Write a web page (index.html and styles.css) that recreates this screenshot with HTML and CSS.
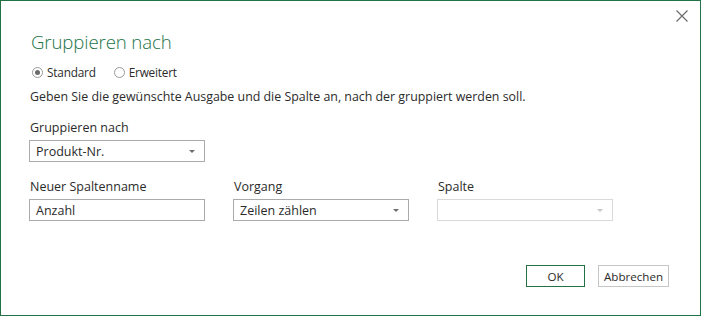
FILE: index.html
```html
<!DOCTYPE html>
<html lang="de">
<head>
<meta charset="utf-8">
<link rel="stylesheet" href="styles.css">
</head>
<body>
<div class="dialog">
  <button class="close" aria-label="Schließen">
    <svg width="12" height="12" viewBox="0 0 12 12"><path d="M0.5 0.5 L11.5 11.5 M11.5 0.5 L0.5 11.5" stroke="#6d6d6d" stroke-width="1.2" fill="none"/></svg>
  </button>
  <h1 class="title">Gruppieren nach</h1>
  <div class="radios">
    <label class="radio"><span class="dot checked"></span>Standard</label>
    <label class="radio"><span class="dot"></span>Erweitert</label>
  </div>
  <p class="desc">Geben Sie die gewünschte Ausgabe und die Spalte an, nach der gruppiert werden soll.</p>
  <div class="label">Gruppieren nach</div>
  <div class="select w"><span>Produkt-Nr.</span><span class="arrow"></span></div>
  <div class="row">
    <div class="col">
      <div class="label">Neuer Spaltenname</div>
      <div class="input">Anzahl</div>
    </div>
    <div class="col">
      <div class="label">Vorgang</div>
      <div class="select"><span>Zeilen zählen</span><span class="arrow"></span></div>
    </div>
    <div class="col">
      <div class="label">Spalte</div>
      <div class="select disabled"><span></span><span class="arrow"></span></div>
    </div>
  </div>
  <div class="buttons">
    <button class="btn ok">OK</button>
    <button class="btn cancel">Abbrechen</button>
  </div>
</div>
</body>
</html>
```
FILE: styles.css
```css
* { box-sizing: border-box; }
html, body { margin: 0; padding: 0; background: #fff; }
body { font-family: "Open Sans", "Noto Sans", sans-serif; font-size: 12.5px; color: #2b2b2b; }
.dialog {
  position: relative;
  width: 701px; height: 316px;
  border: 1px solid #217346;
  padding: 0 0 0 28px;
}
.close {
  position: absolute; top: 8px; right: 11px;
  width: 14px; height: 14px; padding: 0; border: 0; background: none;
  display: flex; align-items: center; justify-content: center;
}
.title {
  margin: 0; padding-top: 29px;
  font-weight: 300; font-size: 18.6px; line-height: 24px;
  color: #217346; letter-spacing: -0.1px;
  padding-left: 2px;
}
.radios { display: flex; gap: 18px; margin-top: 9px; height: 18px; align-items: center; padding-left: 3px; font-size: 11.8px; letter-spacing: -0.2px; }
.radio { display: flex; align-items: center; gap: 4px; }
.dot {
  width: 11px; height: 11px; border-radius: 50%;
  border: 1px solid #9a9a9a; background: #fff; position: relative;
}
.dot.checked::after {
  content: ""; position: absolute; left: 2px; top: 2px;
  width: 5px; height: 5px; border-radius: 50%; background: #6a6a6a;
}
.desc { margin: 7px 0 0 1px; font-size: 12.4px; line-height: 18px; }
.label { height: 18px; line-height: 18px; margin-top: 13px; padding-left: 1px; }
.select, .input {
  width: 176px; height: 22px; border: 1px solid #ababab;
  display: flex; align-items: center; justify-content: space-between;
  padding: 0 9px 0 6px; margin-top: 3px; background: #fff;
}
.arrow { width: 0; height: 0; border-left: 3px solid transparent; border-right: 3px solid transparent; border-top: 3px solid #6d6d6d; }
.select.disabled { border-color: #d9d9d9; }
.select.disabled .arrow { border-top-color: #c6c6c6; }
.row { display: flex; gap: 28px; margin-top: 5px; }
.col .label { margin-top: 11px; }
.buttons { display: flex; justify-content: flex-end; gap: 13px; margin-top: 44px; padding-right: 31px; }
.btn {
  height: 22px; border: 1px solid #c6c6c6; background: #fff;
  font-family: inherit; font-size: 11.6px; color: #2b2b2b; padding: 0;
}
.btn.ok { width: 59px; border: 1px solid #217346; }
.btn.cancel { width: 71px; }
```
